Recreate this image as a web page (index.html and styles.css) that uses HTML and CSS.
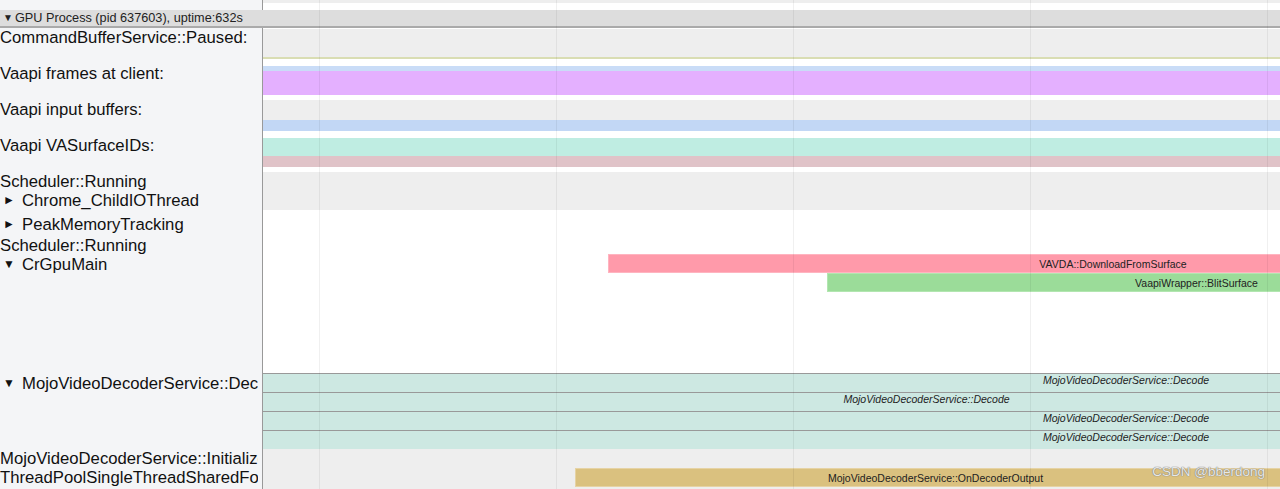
FILE: index.html
```html
<!DOCTYPE html>
<html lang="en">
<head>
    <meta charset="UTF-8">
    <title>Trace viewer - GPU Process</title>
    <link rel="stylesheet" href="styles.css">
</head>
<body>
    <div class="viewer">
        <div class="top-strip">
            <div class="side-stub"></div>
            <div class="track-stub">
                <div class="stub-band"></div>
            </div>
        </div>

        <div class="process-header">
            <span class="header-twisty">▼</span>GPU Process (pid 637603), uptime:632s
        </div>

        <div class="process-body">
            <div class="labels">
                <div class="label h36">CommandBufferService::Paused:</div>
                <div class="label h36">Vaapi frames at client:</div>
                <div class="label h36">Vaapi input buffers:</div>
                <div class="label h36">Vaapi VASurfaceIDs:</div>
                <div class="label h19">Scheduler::Running</div>
                <div class="label h24"><span class="twisty">►</span>Chrome_ChildIOThread</div>
                <div class="label h21"><span class="twisty">►</span>PeakMemoryTracking</div>
                <div class="label h19">Scheduler::Running</div>
                <div class="label h119"><span class="twisty">▼</span>CrGpuMain</div>
                <div class="label h75"><span class="twisty">▼</span>MojoVideoDecoderService::Decode</div>
                <div class="label h19">MojoVideoDecoderService::Initialize</div>
                <div class="label h19">ThreadPoolSingleThreadSharedForeground0</div>
            </div>

            <div class="tracks">
                <div class="band white h1"></div>
                <div class="band grey h28"></div>
                <div class="band olive h2"></div>
                <div class="band white h7"></div>
                <div class="band sky h5"></div>
                <div class="band purple h24"></div>
                <div class="band white h5"></div>
                <div class="band grey h20"></div>
                <div class="band blue h11"></div>
                <div class="band white h7"></div>
                <div class="band teal h18"></div>
                <div class="band rose h11"></div>
                <div class="band white h5"></div>
                <div class="band grey h38"></div>

                <div class="thread white h163">
                    <div class="slice pink" style="left: 345px; top: 44px; width: 1010px;">VAVDA::DownloadFromSurface</div>
                    <div class="slice green" style="left: 564px; top: 63px; width: 739px;">VaapiWrapper::BlitSurface</div>
                </div>

                <div class="mojo-row">
                    <div class="slice mojo" style="left: 0; top: 0; width: 1726px;">MojoVideoDecoderService::Decode</div>
                </div>
                <div class="mojo-row">
                    <div class="slice mojo" style="left: 0; top: 0; width: 1327px;">MojoVideoDecoderService::Decode</div>
                </div>
                <div class="mojo-row">
                    <div class="slice mojo" style="left: 0; top: 0; width: 1726px;">MojoVideoDecoderService::Decode</div>
                </div>
                <div class="mojo-row">
                    <div class="slice mojo" style="left: 0; top: 0; width: 1726px;">MojoVideoDecoderService::Decode</div>
                </div>

                <div class="thread grey h40">
                    <div class="slice gold" style="left: 312px; top: 19px; width: 721px;">MojoVideoDecoderService::OnDecoderOutput</div>
                </div>
            </div>
        </div>

        <div class="grid">
            <div class="grid-line"></div>
            <div class="grid-line"></div>
            <div class="grid-line"></div>
            <div class="grid-line"></div>
            <div class="grid-line"></div>
        </div>

        <div class="watermark">CSDN @bberdong</div>
    </div>
</body>
</html>
```

FILE: styles.css
```css
body {
    margin: 0;
    padding: 0;
    background: #fff;
    color: #111;
    font-family: 'Liberation Sans', Arial, sans-serif;
    overflow: hidden;
}

.viewer {
    position: relative;
    width: 1280px;
    height: 489px;
    overflow: hidden;
}

/* strip above the process header */
.top-strip {
    display: flex;
    height: 10px;
}

.side-stub {
    width: 262px;
    background: #f4f5f7;
    border-right: 1px solid #999;
}

.track-stub {
    flex: 1;
    background: #fff;
}

.stub-band {
    height: 3px;
    background: #eee;
}

.process-header {
    height: 16px;
    line-height: 16px;
    background: #ddd;
    border-bottom: 2px solid #aaa;
    font-size: 12.7px;
    color: #222;
    white-space: nowrap;
}

.header-twisty {
    display: inline-block;
    width: 15px;
    padding-left: 3px;
    box-sizing: border-box;
    font-size: 10px;
    vertical-align: top;
}

.process-body {
    display: flex;
}

/* left label column */
.labels {
    width: 262px;
    flex-shrink: 0;
    background: #f4f5f7;
    border-right: 1px solid #999;
    overflow: hidden;
}

.label {
    width: 258px;
    overflow: hidden;
    white-space: nowrap;
    font-size: 16.7px;
    line-height: 19px;
}

.twisty {
    display: inline-block;
    width: 22px;
    padding-left: 3px;
    box-sizing: border-box;
    font-size: 12px;
    vertical-align: top;
}

/* right track column */
.tracks {
    flex: 1;
    position: relative;
    overflow: hidden;
}

.band,
.thread {
    width: 100%;
}

.thread {
    position: relative;
}

.white { background: #fff; }
.grey { background: #eee; }
.olive { background: #d9ddb3; }
.sky { background: #c9dcf7; }
.purple { background: #e4b0ff; }
.blue { background: #c2d7f5; }
.teal { background: #bfede2; }
.rose { background: #e0c3c8; }

.h1 { height: 1px; }
.h2 { height: 2px; }
.h5 { height: 5px; }
.h7 { height: 7px; }
.h11 { height: 11px; }
.h18 { height: 18px; }
.h19 { height: 19px; }
.h20 { height: 20px; }
.h21 { height: 21px; }
.h24 { height: 24px; }
.h28 { height: 28px; }
.h36 { height: 36px; }
.h38 { height: 38px; }
.h40 { height: 40px; }
.h75 { height: 75px; }
.h119 { height: 119px; }
.h163 { height: 163px; }

.mojo-row {
    position: relative;
    height: 18px;
    border-top: 1px solid #999;
    background: #cde8e2;
}

.slice {
    position: absolute;
    height: 19px;
    line-height: 19px;
    font-size: 10.5px;
    color: #222;
    text-align: center;
    white-space: nowrap;
    overflow: hidden;
    box-sizing: border-box;
}

.pink {
    background: #ff9aaa;
    border: 1px solid #ffb4c0;
}

.green {
    background: #9bdc99;
    border: 1px solid #b2e6b0;
}

.mojo {
    height: 18px;
    line-height: 12px;
    background: #cde8e2;
    font-style: italic;
}

.gold {
    background: #dac17f;
    border: 1px solid #e6d3a4;
}

/* time grid overlay */
.grid {
    position: absolute;
    top: 0;
    left: 263px;
    right: 0;
    bottom: 0;
    display: flex;
    gap: 236px;
    padding-left: 56px;
    pointer-events: none;
}

.grid-line {
    width: 1px;
    background: rgba(0, 0, 0, 0.06);
}

.watermark {
    position: absolute;
    right: 15px;
    bottom: 10px;
    font-size: 13.5px;
    color: #e8e8e8;
    text-shadow: 0 0 1px #777, 0 0 1px #777;
}
```
